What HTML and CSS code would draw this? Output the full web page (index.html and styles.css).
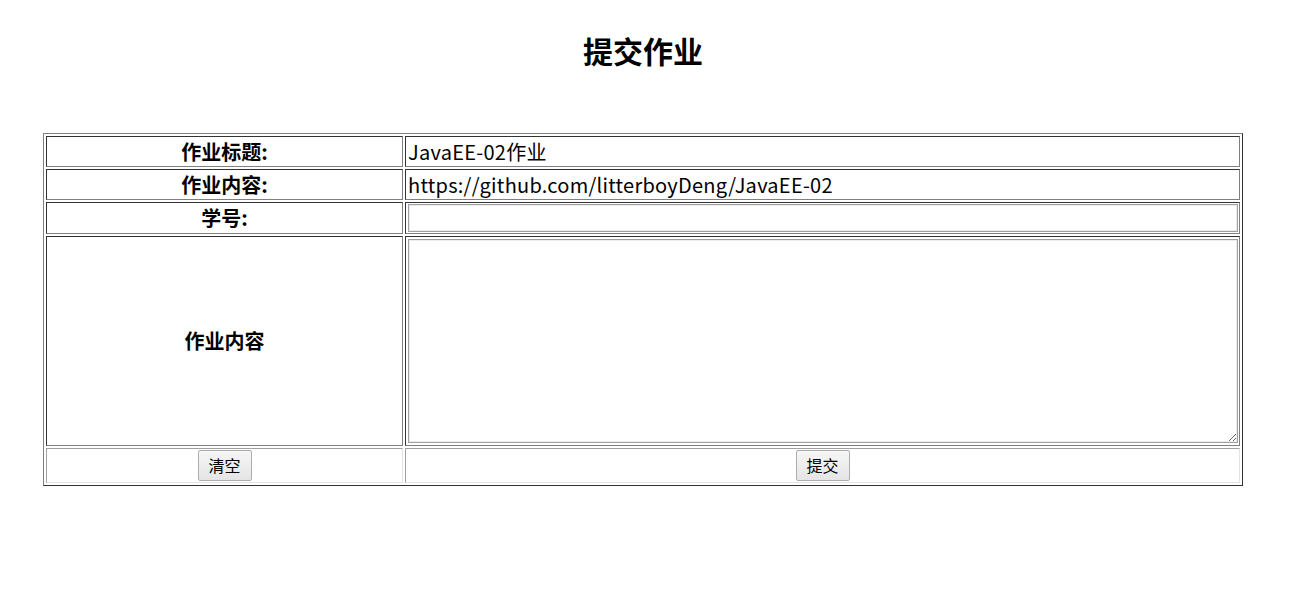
FILE: index.html
```html
<!DOCTYPE html>
<html lang="zh-CN">
<head>
<meta charset="utf-8">
<title>提交作业</title>
<link rel="stylesheet" href="styles.css">
</head>
<body>
<div class="page">
  <h2 class="title">提交作业</h2>
  <form class="hw-form">
    <table class="form-table">
      <colgroup><col class="col-label"><col class="col-value"></colgroup>
      <tr class="row-text">
        <th class="label">作业标题:</th>
        <td class="value">JavaEE-02作业</td>
      </tr>
      <tr class="row-text">
        <th class="label">作业内容:</th>
        <td class="value">https://github.com/litterboyDeng/JavaEE-02</td>
      </tr>
      <tr class="row-input">
        <th class="label">学号:</th>
        <td class="value"><input class="field" type="text"></td>
      </tr>
      <tr class="row-area">
        <th class="label">作业内容</th>
        <td class="value"><textarea class="area"></textarea></td>
      </tr>
      <tr class="row-actions">
        <td class="action"><button type="button" class="btn">清空</button></td>
        <td class="action"><button type="button" class="btn">提交</button></td>
      </tr>
    </table>
  </form>
</div>
</body>
</html>
```
FILE: styles.css
```css
html, body {
  margin: 0;
  padding: 0;
  background: #fff;
}
body {
  font-family: "Noto Sans CJK SC", "Noto Sans", sans-serif;
  color: #000;
}
.page {
  width: 1200px;
  margin-left: 43px;
  padding-top: 30px;
}
.title {
  margin: 0;
  font-size: 30px;
  line-height: 40px;
  font-weight: bold;
  text-align: center;
}
.hw-form {
  margin: 0;
  padding-top: 63px;
}
.form-table {
  width: 1200px;
  table-layout: fixed;
  border-collapse: separate;
  border-spacing: 2px;
  border: 1px solid;
  border-color: #808080 #333 #333 #808080;
}
.col-label { width: 357px; }
.col-value { width: 835px; }
.form-table th,
.form-table td {
  border: 1px solid;
  border-color: #333 #808080 #808080 #333;
  padding: 1px;
  font-size: 20px;
  line-height: 26px;
  vertical-align: middle;
}
.form-table th {
  font-weight: bold;
  text-align: center;
}
.form-table td.value {
  text-align: left;
  padding-left: 2px;
  letter-spacing: 0.25px;
}
.row-text { height: 31px; }
.row-input { height: 32px; }
.row-area { height: 210px; }
.row-actions { height: 35px; }
.form-table td.action {
  border-color: #a0a0a0 #e3e3e3 #e3e3e3 #a0a0a0;
  text-align: center;
  padding: 1px;
}
.field,
.area {
  display: block;
  width: 100%;
  box-sizing: border-box;
  margin: 0;
  border: 1px solid #a0a0a0;
  box-shadow: inset 0 0 0 1px #ececec;
  font-family: inherit;
  font-size: 20px;
  background: #fff;
  outline: none;
}
.field {
  height: 28px;
  padding: 0 2px;
}
.area {
  height: 204px;
  padding: 2px;
  resize: both;
}
.btn {
  width: 54px;
  height: 31px;
  padding: 0;
  margin: 0;
  border: 1px solid #adadad;
  border-radius: 2px;
  background: linear-gradient(#f6f6f6, #e5e5e5);
  font-family: "Noto Sans CJK SC", sans-serif;
  font-size: 16px;
  line-height: 29px;
  color: #000;
  vertical-align: middle;
}
```
